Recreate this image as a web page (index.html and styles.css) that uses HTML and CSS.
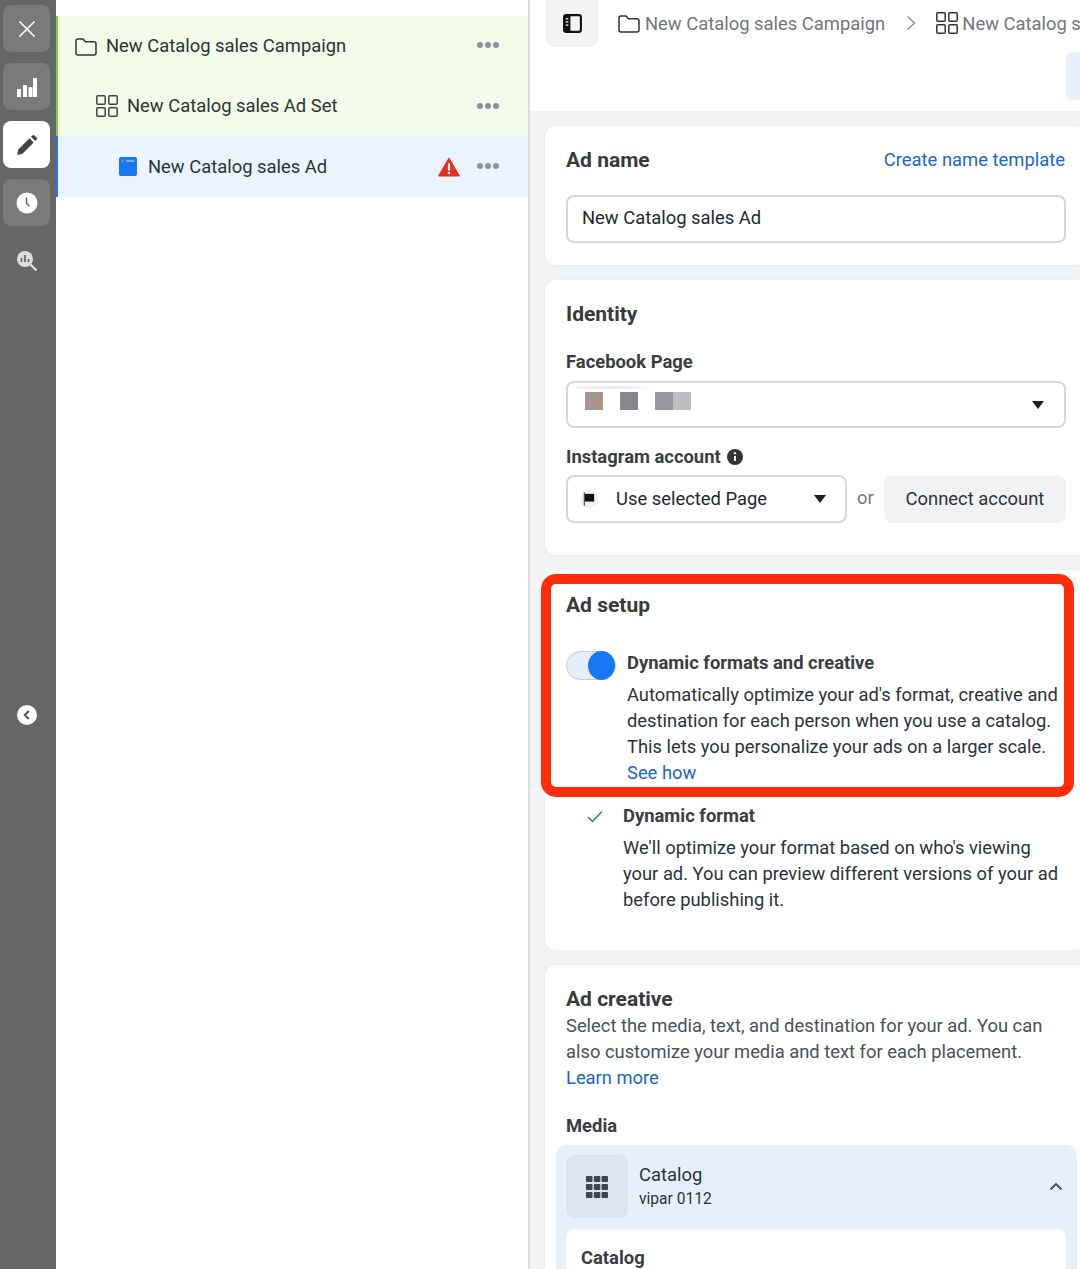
FILE: index.html
```html
<!DOCTYPE html>
<html lang="en">
<head>
<meta charset="utf-8">
<title>New Catalog sales Ad</title>
<link rel="stylesheet" href="styles.css">
</head>
<body>
<div class="app">
  <nav class="rail">
    <button class="rail-btn"><svg width="20" height="20" viewBox="0 0 20 20"><path d="M2.5 2.5l15 15M17.5 2.5l-15 15" stroke="#fff" stroke-width="1.6" fill="none"/></svg></button>
    <button class="rail-btn"><svg width="22" height="22" viewBox="0 0 22 22" fill="#fff"><rect x="1" y="13" width="4" height="8" rx=".6"/><rect x="7" y="9" width="4" height="12" rx=".6"/><rect x="12.500" y="11" width="4" height="10" rx=".6"/><rect x="17" y="2" width="4" height="19" rx=".6"/></svg></button>
    <button class="rail-btn active"><svg width="22" height="22" viewBox="0 0 22 22" fill="#444"><path d="M1 21l1.300-5.500L13.500 4.300l4.200 4.200L6.500 19.700z"/><path d="M15 2.800l1.400-1.400a1.500 1.500 0 0 1 2.100 0l2.100 2.100a1.500 1.500 0 0 1 0 2.100L19.200 7z"/></svg></button>
    <button class="rail-btn"><svg width="22" height="22" viewBox="0 0 22 22"><circle cx="11" cy="11" r="10.500" fill="#fff"/><path d="M10.500 5.500v5.800l3 3" stroke="#666" stroke-width="1.500" fill="none"/></svg></button>
    <div class="rail-search"><svg width="22" height="22" viewBox="0 0 22 22"><circle cx="9" cy="9" r="8" fill="#ddd"/><path d="M14.500 14.500l6 6" stroke="#ddd" stroke-width="2.400"/><path d="M5.500 8v4M9 5v7M12.500 9v3" stroke="#666" stroke-width="1.800"/></svg></div>
    <div class="rail-collapse"><svg width="20" height="20" viewBox="0 0 20 20"><circle cx="10" cy="10" r="10" fill="#fff"/><path d="M11.800 6l-4 4 4 4" stroke="#555" stroke-width="2" fill="none"/></svg></div>
  </nav>

  <aside class="tree">
    <div class="tree-row campaign">
      <svg class="ico" width="22" height="20" viewBox="0 0 22 20"><path d="M1 5a2 2 0 0 1 2-2h5l2.500 2.800H19a2 2 0 0 1 2 2V17a2 2 0 0 1-2 2H3a2 2 0 0 1-2-2z" fill="none" stroke="#333" stroke-width="1.500"/></svg>
      <span class="tree-label">New Catalog sales Campaign</span>
      <span class="dots"><i></i><i></i><i></i></span>
    </div>
    <div class="tree-row adset">
      <svg class="ico" width="22" height="22" viewBox="0 0 22 22" fill="none" stroke="#444" stroke-width="1.500"><rect x=".8" y=".8" width="8.400" height="8.400" rx="1"/><rect x="12.800" y=".8" width="8.400" height="8.400" rx="1"/><rect x=".8" y="12.800" width="8.400" height="8.400" rx="1"/><rect x="12.800" y="12.800" width="8.400" height="8.400" rx="1"/></svg>
      <span class="tree-label">New Catalog sales Ad Set</span>
      <span class="dots"><i></i><i></i><i></i></span>
    </div>
    <div class="tree-row ad">
      <svg class="ico" width="18" height="19" viewBox="0 0 18 19"><rect width="18" height="19" rx="2" fill="#1877f2"/><path d="M3 4h1M7 4h8" stroke="#cfe3fc" stroke-width="1"/></svg>
      <span class="tree-label">New Catalog sales Ad</span>
      <svg class="warn" width="22" height="20" viewBox="0 0 22 20"><path d="M11 1L21.500 19H.5z" fill="#e0301e" stroke="#e0301e" stroke-linejoin="round"/><path d="M11 6.500v7" stroke="#fff" stroke-width="2.200"/><circle cx="11" cy="16" r="1.300" fill="#fff"/></svg>
      <span class="dots"><i></i><i></i><i></i></span>
    </div>
  </aside>

  <main class="main">
    <header class="topbar">
      <button class="panel-btn"><svg width="21" height="21" viewBox="0 0 20 20"><rect x="1" y="1" width="18" height="18" rx="3" fill="#111"/><rect x="8" y="3" width="9" height="14" rx="1" fill="#f2f3f4"/><path d="M3.500 5.500h2.500M3.500 8.500h2.500M3.500 11.500h2.500" stroke="#fff" stroke-width="1.200"/></svg></button>
      <div class="crumbs">
        <svg width="22" height="20" viewBox="0 0 22 20"><path d="M1 5a2 2 0 0 1 2-2h5l2.500 2.800H19a2 2 0 0 1 2 2V17a2 2 0 0 1-2 2H3a2 2 0 0 1-2-2z" fill="none" stroke="#333" stroke-width="1.500"/></svg>
        <span class="crumb">New Catalog sales Campaign</span>
        <svg class="crumb-sep" width="10" height="16" viewBox="0 0 10 16"><path d="M1.500 1.500l7 6.500-7 6.500" fill="none" stroke="#888" stroke-width="1.300"/></svg>
        <svg width="22" height="22" viewBox="0 0 22 22" fill="none" stroke="#333" stroke-width="1.500"><rect x=".8" y=".8" width="8.400" height="8.400" rx="1"/><rect x="12.800" y=".8" width="8.400" height="8.400" rx="1"/><rect x=".8" y="12.800" width="8.400" height="8.400" rx="1"/><rect x="12.800" y="12.800" width="8.400" height="8.400" rx="1"/></svg>
        <span class="crumb crumb-last">New Catalog sales Ad Set</span>
      </div>
      <div class="top-action"></div>
    </header>

    <div class="content">
      <section class="card name-card">
        <div class="card-head">
          <h2 class="title">Ad name</h2>
          <a class="link">Create name template</a>
        </div>
        <div class="field name-field">New Catalog sales Ad</div>
      </section>

      <section class="card identity-card">
        <h2 class="title">Identity</h2>
        <h3 class="label fb-label">Facebook Page</h3>
        <div class="field page-field">
          <span class="mask m1"></span><span class="mask m2"></span><span class="mask m3"></span><span class="mask m4"></span>
          <span class="caret push"></span>
        </div>
        <h3 class="label ig-label">Instagram account <svg class="info" width="16" height="16" viewBox="0 0 16 16"><circle cx="8" cy="8" r="8" fill="#333"/><path d="M8 7v5" stroke="#fff" stroke-width="2"/><circle cx="8" cy="4.300" r="1.200" fill="#fff"/></svg></h3>
        <div class="ig-row">
          <div class="field ig-field">
            <span class="flag-wrap"><svg width="12" height="14" viewBox="0 0 14 16"><path d="M1.500 0v16" stroke="#222" stroke-width="1"/><rect x="2" y="2" width="11" height="9" fill="#111"/></svg></span>
            <span class="ig-text">Use selected Page</span>
            <span class="caret push"></span>
          </div>
          <span class="or">or</span>
          <button class="connect">Connect account</button>
        </div>
      </section>

      <section class="card setup-card">
        <h2 class="title">Ad setup</h2>
        <div class="setup-row">
          <span class="toggle"><span class="knob"></span></span>
          <div class="setup-text">
            <h3 class="label">Dynamic formats and creative</h3>
            <p class="para">Automatically optimize your ad's format, creative and destination for each person when you use a catalog. This lets you personalize your ads on a larger scale. <a class="link block">See how</a></p>
          </div>
        </div>
        <div class="format-row">
          <svg class="check" width="16" height="13" viewBox="0 0 16 13"><path d="M1 7l4.500 4.500L15 1.500" fill="none" stroke="#1b74e4" stroke-width="1.500"/></svg>
          <div class="format-text">
            <h3 class="label">Dynamic format</h3>
            <p class="para format-para">We'll optimize your format based on who's viewing your ad. You can preview different versions of your ad before publishing it.</p>
          </div>
        </div>
        <div class="highlight"></div>
      </section>

      <section class="card creative-card">
        <h2 class="title">Ad creative</h2>
        <p class="para muted">Select the media, text, and destination for your ad. You can also customize your media and text for each placement. <a class="link block">Learn more</a></p>
        <h3 class="label media-label">Media</h3>
        <div class="media-box">
          <div class="media-head">
            <span class="media-icon"><svg width="22" height="22" viewBox="0 0 22 22" fill="#3c4650"><rect x="0" y="0" width="6.500" height="6" rx="1"/><rect x="7.800" y="0" width="6.500" height="6" rx="1"/><rect x="15.500" y="0" width="6.500" height="6" rx="1"/><rect x="0" y="8" width="6.500" height="6" rx="1"/><rect x="7.800" y="8" width="6.500" height="6" rx="1"/><rect x="15.500" y="8" width="6.500" height="6" rx="1"/><rect x="0" y="16" width="6.500" height="6" rx="1"/><rect x="7.800" y="16" width="6.500" height="6" rx="1"/><rect x="15.500" y="16" width="6.500" height="6" rx="1"/></svg></span>
            <div class="media-text">
              <div class="media-name">Catalog</div>
              <div class="media-sub">vipar 0112</div>
            </div>
            <svg class="chev" width="14" height="9" viewBox="0 0 14 9"><path d="M1.500 7.500L7 2l5.500 5.500" fill="none" stroke="#4b5560" stroke-width="2"/></svg>
          </div>
          <div class="media-inner"><h3 class="label">Catalog</h3></div>
        </div>
      </section>
    </div>
  </main>
</div>
</body>
</html>
```
FILE: styles.css
```css
* { box-sizing: border-box; }
html, body { margin: 0; height: 100%; overflow: hidden; }
body { font-family: Roboto, "Liberation Sans", sans-serif; color: #1c2b33; background: #fff; }
h2, h3, p { margin: 0; }
button { font: inherit; border: 0; padding: 0; }

.app { display: flex; width: 1080px; height: 1269px; overflow: hidden; }

/* left rail */
.rail { flex: 0 0 56px; background: #666; display: flex; flex-direction: column; align-items: flex-start; padding: 5px 0 0 3px; gap: 11px; }
.rail-btn { width: 47px; height: 47px; border-radius: 8px; background: #7a7a7a; display: flex; align-items: center; justify-content: center; }
.rail-btn.active { background: #fff; }
.rail-search { width: 47px; height: 22px; margin-top: 13px; display: flex; justify-content: center; }
.rail-collapse { width: 47px; height: 20px; margin-top: 422px; display: flex; justify-content: center; }

/* tree */
.tree { flex: 0 0 474px; padding-top: 16px; border-right: 2px solid #dcdddf; background: #fff; }
.tree-row { display: flex; align-items: center; height: 60px; border-left: 2px solid #7ed03c; background: #f4fbea; padding-right: 29px; }
.tree-row.campaign { padding-left: 17px; }
.tree-row.adset { padding-left: 38px; }
.tree-row.ad { padding-left: 61px; height: 61px; background: #eaf3fe; border-left-color: #1877f2; }
.ico { flex: none; margin-right: 9px; }
.tree-row.ad .ico { margin-right: 11px; }
.tree-label { font-size: 18.4px; line-height: 24px; color: #2b3530; }
.dots { margin-left: auto; display: flex; gap: 2px; }
.dots i { width: 6px; height: 6px; border-radius: 50%; background: #8b929e; }
.campaign .dots, .ad .dots { margin-top: -2px; }
.warn { margin-left: auto; margin-right: 17px; }
.warn + .dots { margin-left: 0; }

/* main */
.main { flex: 1 1 auto; min-width: 0; background: #f2f3f5; overflow: hidden; }
.topbar { position: relative; height: 111px; background: #fff; display: flex; align-items: flex-start; padding-left: 16px; overflow: hidden; }
.panel-btn { flex: none; width: 52px; height: 47px; border-radius: 0 0 8px 8px; background: #f2f3f4; display: flex; align-items: center; justify-content: center; }
.crumbs { display: flex; align-items: center; height: 46px; margin-left: 20px; white-space: nowrap; }
.crumb { font-size: 18.4px; color: #70777c; margin-left: 5px; }
.crumb-last { margin-left: 4px; }
.crumb-sep { margin: 0 20px 0 21px; }
.top-action { position: absolute; left: 536px; top: 52px; width: 60px; height: 48px; border-radius: 8px; background: #e7f1fd; }

.content { width: 550px; padding: 15px 0 0 15px; display: flex; flex-direction: column; gap: 15px; }
.card { position: relative; width: 540px; background: #fff; border-radius: 10px; padding-left: 21px; box-shadow: 0 0 2px rgba(0,0,0,.08); }
.title { font-size: 21px; line-height: 28px; font-weight: 700; color: #383a3c; }
.label { font-size: 18.4px; line-height: 24px; font-weight: 700; color: #3b3d3f; }
.link { color: #1b66c9; }
.block { display: block; }
.para { font-size: 18.35px; line-height: 26px; color: #2c3338; }
.muted { color: #4b5156; }

.field { width: 500px; background: #fff; border: 2px solid #d5d7d9; border-radius: 8px; display: flex; align-items: center; font-size: 18.4px; color: #22292e; }
.caret { width: 0; height: 0; border-left: 6.5px solid transparent; border-right: 6.5px solid transparent; border-top: 8px solid #1c2024; }
.push { margin-left: auto; }

/* ad name */
.name-card { height: 139px; padding-top: 20px; }
.card-head { display: flex; justify-content: space-between; align-items: center; width: 499px; height: 28px; }
.card-head .link { font-size: 18.4px; margin-top: -2px; }
.name-field { height: 48px; margin-top: 21px; padding: 0 0 3px 14px; }

/* identity */
.identity-card { height: 275px; padding-top: 20px; }
.fb-label { margin-top: 22px; }
.page-field { height: 47px; margin-top: 7px; padding: 0 20px 0 17px; position: relative; }
.page-field::before { content: ""; position: absolute; left: 8px; top: 3px; width: 80px; height: 3px; background: linear-gradient(90deg, #f4f4f5, #e9e9ea 50%, #fff); }
.mask { height: 18px; margin-top: -8px; flex: none; }
.m1 { width: 18px; background: #a8958c; }
.m2 { width: 18px; margin-left: 17px; background: #87878b; }
.m3 { width: 18px; margin-left: 17px; background: #98989c; }
.m4 { width: 18px; background: #bdbdc0; }
.ig-label { margin-top: 17px; display: flex; align-items: center; gap: 6px; }
.info { flex: none; }
.ig-row { display: flex; align-items: center; margin-top: 6px; width: 500px; height: 48px; }
.ig-field { flex: 0 0 281px; width: 281px; height: 48px; padding: 0 19px 0 12px; }
.flag-wrap { width: 18px; height: 18px; border-radius: 50%; background: #f1f1f2; display: flex; align-items: center; justify-content: center; flex: none; }
.ig-text { margin-left: 18px; margin-top: -2px; }
.or { margin-left: 10px; margin-top: -3px; font-size: 18.4px; color: #777; }
.connect { margin-left: auto; width: 182px; height: 47px; padding-bottom: 2px; border-radius: 8px; background: #f2f2f4; font-size: 18.4px; color: #2c3338; }

/* ad setup */
.setup-card { height: 380px; padding-top: 21px; }
.setup-row { display: flex; margin-top: 32px; }
.toggle { flex: none; width: 50px; height: 29px; margin: 0; padding: 0; border-radius: 15px; background: #e6edf9; border: 1px solid #c6cad3; position: relative; }
.knob { position: absolute; right: 0; top: -1px; width: 27px; height: 29px; border-radius: 50%; background: #1877f2; }
.setup-text { margin-left: 11px; width: 440px; }
.setup-text .para { margin-top: 7px; }
.format-row { display: flex; margin-top: 18px; padding-left: 21px; }
.check { flex: none; margin-top: 6px; }
.format-text { margin-left: 20px; width: 440px; }
.format-para { margin-top: 7px; }
.highlight { position: absolute; left: -4px; top: 4px; width: 533px; height: 223px; border: 10px solid #ff2d0a; border-radius: 15px; pointer-events: none; }

/* ad creative */
.creative-card { height: 340px; padding-top: 20px; }
.creative-card .para { width: 490px; margin-top: 0; }
.media-label { margin-top: 23px; }
.media-box { width: 521px; height: 200px; margin: 7px 0 0 -10px; padding: 10px 10px 0; border-radius: 10px; background: #e6f0fc; }
.media-head { display: flex; align-items: center; height: 63px; position: relative; }
.media-icon { flex: none; width: 62px; height: 63px; border-radius: 8px; background: #dbe5f0; display: flex; align-items: center; justify-content: center; }
.media-text { margin: -2px 0 0 11px; }
.media-name { font-size: 18.4px; line-height: 24px; color: #2a3238; }
.media-sub { font-size: 15.6px; line-height: 20px; margin-top: 2px; color: #2a3238; }
.chev { margin-left: auto; margin-right: 4px; }
.media-inner { margin-top: 11px; width: 500px; height: 120px; background: #fff; border-radius: 8px; padding: 17px 15px 0; }
```
